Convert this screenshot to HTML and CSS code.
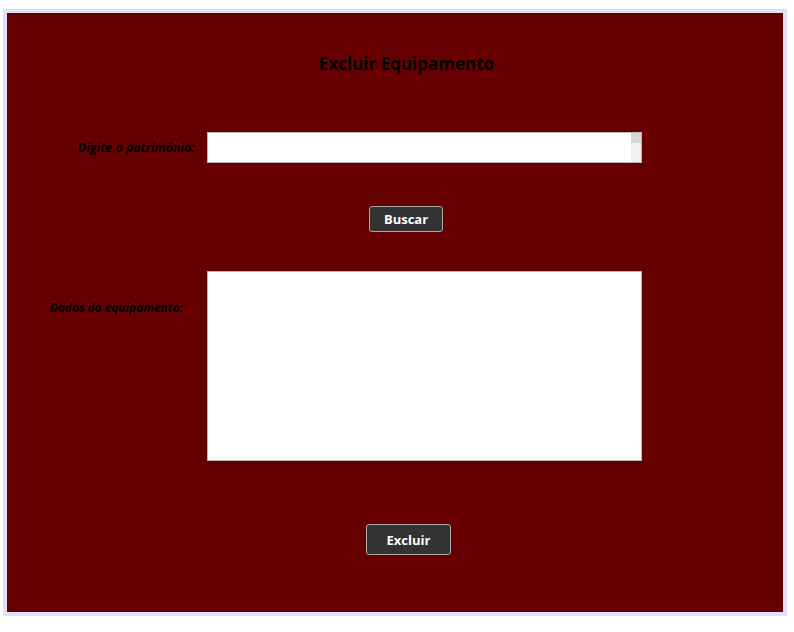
FILE: index.html
```html
<!DOCTYPE html>
<html lang="pt">
<head>
<meta charset="utf-8">
<title>Excluir Equipamento</title>
<link rel="stylesheet" href="styles.css">
</head>
<body>
<div class="frame">
  <div class="panel">
    <h1 class="title">Excluir Equipamento</h1>
    <div class="row row-input">
      <label class="label label-pat">Digite o patrimônio:</label>
      <div class="field">
        <div class="field-text"></div>
        <div class="scrollbar"><div class="thumb"></div></div>
      </div>
    </div>
    <div class="btn-row btn-row-buscar">
      <button class="btn btn-buscar">Buscar</button>
    </div>
    <div class="row row-area">
      <label class="label label-dados">Dados do equipamento:</label>
      <div class="area"></div>
    </div>
    <div class="btn-row btn-row-excluir">
      <button class="btn btn-excluir">Excluir</button>
    </div>
  </div>
</div>
</body>
</html>
```
FILE: styles.css
```css
html, body {
  margin: 0;
  padding: 0;
  background: #ffffff;
}
body {
  padding: 9px 7px 16px 3px;
  font-family: "Open Sans", "Noto Sans", sans-serif;
}
.frame {
  width: 776px;
  height: 599px;
  border: 4px solid #e0e0f8;
  background: #660000;
}
.panel {
  display: flex;
  flex-direction: column;
}
.title {
  margin: 39px 0 0 200px;
  width: 399px;
  text-align: center;
  font-size: 17px;
  line-height: 23px;
  font-weight: 700;
  color: #000;
}
.row {
  display: flex;
  align-items: flex-start;
}
.row-input {
  margin-top: 57px;
  align-items: center;
}
.label {
  width: 200px;
  box-sizing: border-box;
  text-align: right;
  font-style: italic;
  font-weight: 700;
  font-size: 12.4px;
  color: #000;
}
.label-pat {
  padding-right: 12px;
}
.label-dados {
  padding-right: 24px;
  margin-top: 28px;
  font-size: 11.9px;
}
.field {
  width: 435px;
  height: 31px;
  box-sizing: border-box;
  border: 1px solid #b4b4b4;
  background: #fff;
  display: flex;
}
.field-text {
  flex: 1;
}
.scrollbar {
  width: 10px;
  background: #f0f0f0;
  display: flex;
  flex-direction: column;
}
.thumb {
  height: 10px;
  background: #d6d6d6;
}
.btn-row {
  display: flex;
  justify-content: center;
  padding-left: 22px;
}
.btn-row-buscar {
  margin-top: 43px;
}
.btn-row-excluir {
  margin-top: 63px;
}
.btn {
  box-sizing: border-box;
  background: #333333;
  color: #ffffff;
  border: 1px solid #a8a8a8;
  border-radius: 3px;
  font-family: "Open Sans", "Noto Sans", sans-serif;
  font-weight: 700;
  font-size: 13px;
  padding: 0;
}
.btn-buscar {
  width: 74px;
  height: 26px;
}
.btn-excluir {
  width: 85px;
  height: 31px;
  margin-left: 5px;
}
.row-area {
  margin-top: 39px;
}
.area {
  width: 435px;
  height: 190px;
  box-sizing: border-box;
  border: 1px solid #b4b4b4;
  background: #fff;
}
```
